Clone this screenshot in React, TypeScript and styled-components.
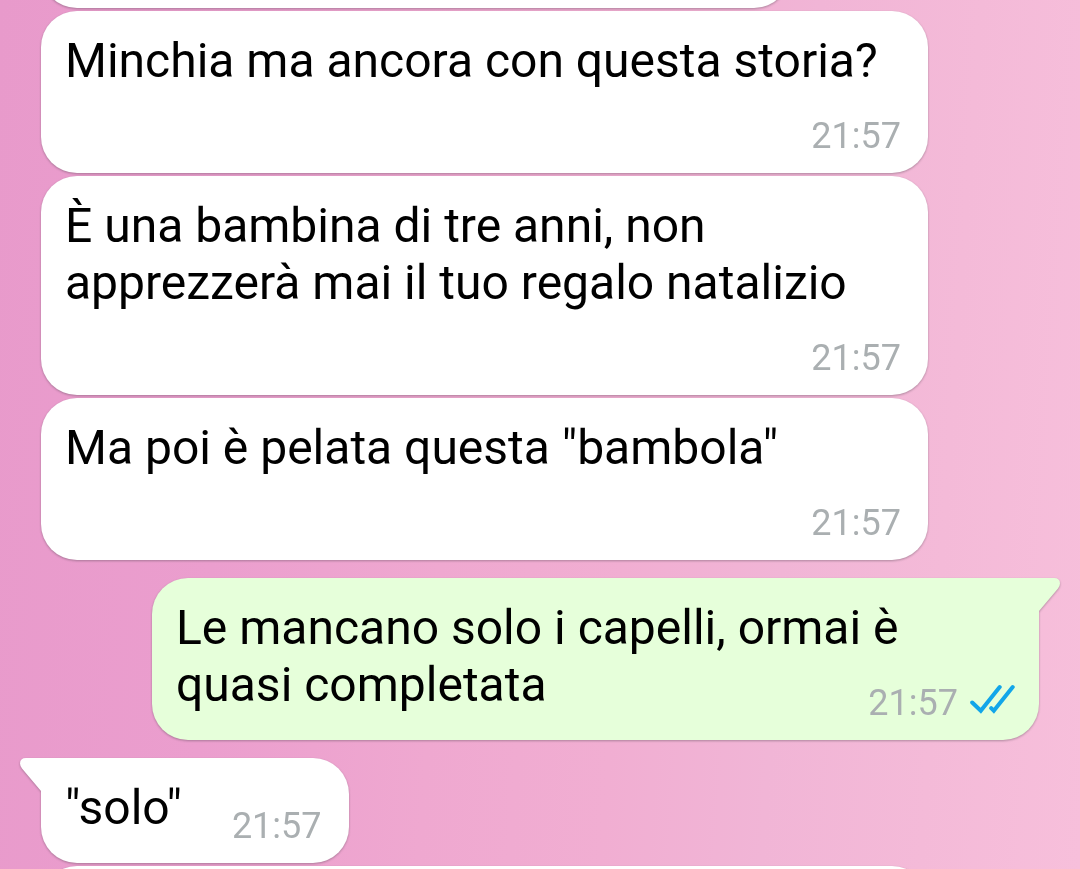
import React from "react";
import styled, { createGlobalStyle, css } from "styled-components";

const GlobalStyle = createGlobalStyle`
  html {
    min-height: 100%;
    overflow: hidden;
    background: linear-gradient(94deg, #e89acb 0%, #eb9ece 22%, #efa8d0 42%, #f1aed2 58%, #f1b5d6 72%, #f4bad8 86%, #f7bfdb 100%);
  }
  body {
    margin: 0;
    font-family: Roboto, "Liberation Sans", sans-serif;
  }
`;

type Side = "in" | "out";

const Chat = styled.main`
  box-sizing: border-box;
  height: 100vh;
  padding: 0 41px;
  overflow: hidden;
`;

const Group = styled.section`
  display: flex;
  flex-direction: column;
  gap: 3px;
  margin-bottom: 18px;
`;

/* Holds a message that is scrolled past the top edge. */
const ScrolledPast = styled.div`
  display: flex;
  flex-direction: column;
  justify-content: flex-end;
  height: 8px;
`;

const Bubble = styled.article<{ $side: Side; $tail?: boolean }>`
  position: relative;
  display: flow-root;
  box-sizing: border-box;
  flex-shrink: 0;
  max-width: calc(100% - 111px);
  border-radius: 36px;
  color: #000;
  font-size: 48px;
  line-height: 57px;
  filter: drop-shadow(0 1px 1px rgba(70, 60, 70, 0.4));
  ${({ $side, $tail }) =>
    $side === "in"
      ? css`
          align-self: flex-start;
          padding: 21px 27px 17px 24px;
          background: #fff;
          ${$tail && "border-top-left-radius: 0;"}
        `
      : css`
          align-self: flex-end;
          padding: 21px 24px 17px 24px;
          background: #e6ffda;
          ${$tail && "border-top-right-radius: 0;"}
        `}
`;

const BlankBubble = styled(Bubble)<{ $share: number }>`
  width: ${({ $share }) => $share}%;
  height: 162px;
`;

/* Floats so it shares the last line of text when there is room for it. */
const Meta = styled.footer`
  float: right;
  display: flex;
  align-items: flex-start;
  gap: 12px;
  margin: 27px 0 0 50px;
  font-size: 36px;
  line-height: 40px;
  color: #aaafb1;
`;

const Tail = styled.svg<{ $side: Side }>`
  position: absolute;
  top: 0;
  width: 22px;
  height: 34px;
  ${({ $side }) =>
    $side === "out"
      ? "left: 100%; margin-left: -1px; fill: #e6ffda;"
      : "right: 100%; margin-right: -1px; fill: #fff; transform: scaleX(-1);"}
`;

const Ticks = styled.svg`
  width: 45px;
  height: 32px;
  fill: none;
  stroke: #12a6e9;
  stroke-width: 4;
  stroke-linecap: round;
`;

type MessageProps = { side: Side; time: string; tail?: boolean; read?: boolean; children: React.ReactNode };

function Message({ side, time, tail, read, children }: MessageProps) {
  return (
    <Bubble $side={side} $tail={tail}>
      {tail && (
        <Tail $side={side} viewBox="0 0 22 34" aria-hidden="true">
          <path d="M0 0H16Q22 0 22 5.500Q22 7.500 20 10.500L1 33V34H0Z" />
        </Tail>
      )}
      {children}
      <Meta>
        <time>{time}</time>
        {read && (
          <Ticks viewBox="0 0 45 32" role="img" aria-label="Letto">
            <path d="M2.200 19.500L10.800 27.800L29.700 4" />
            <path d="M21.200 25.200L23.800 27.800L42.700 4" />
          </Ticks>
        )}
      </Meta>
    </Bubble>
  );
}

export default function App() {
  return (
    <>
      <GlobalStyle />
      <Chat>
        <Group>
          <ScrolledPast aria-hidden="true">
            <BlankBubble $side="in" $share={75} />
          </ScrolledPast>
          <Message side="in" time="21:57">Minchia ma ancora con questa storia?</Message>
          <Message side="in" time="21:57">È una bambina di tre anni, non apprezzerà mai il tuo regalo natalizio</Message>
          <Message side="in" time="21:57">Ma poi è pelata questa "bambola"</Message>
        </Group>
        <Group>
          <Message side="out" time="21:57" tail read>Le mancano solo i capelli, ormai è quasi completata</Message>
        </Group>
        <Group>
          <Message side="in" time="21:57" tail>"solo"</Message>
          <BlankBubble $side="in" $share={100} aria-hidden="true" />
        </Group>
      </Chat>
    </>
  );
}
